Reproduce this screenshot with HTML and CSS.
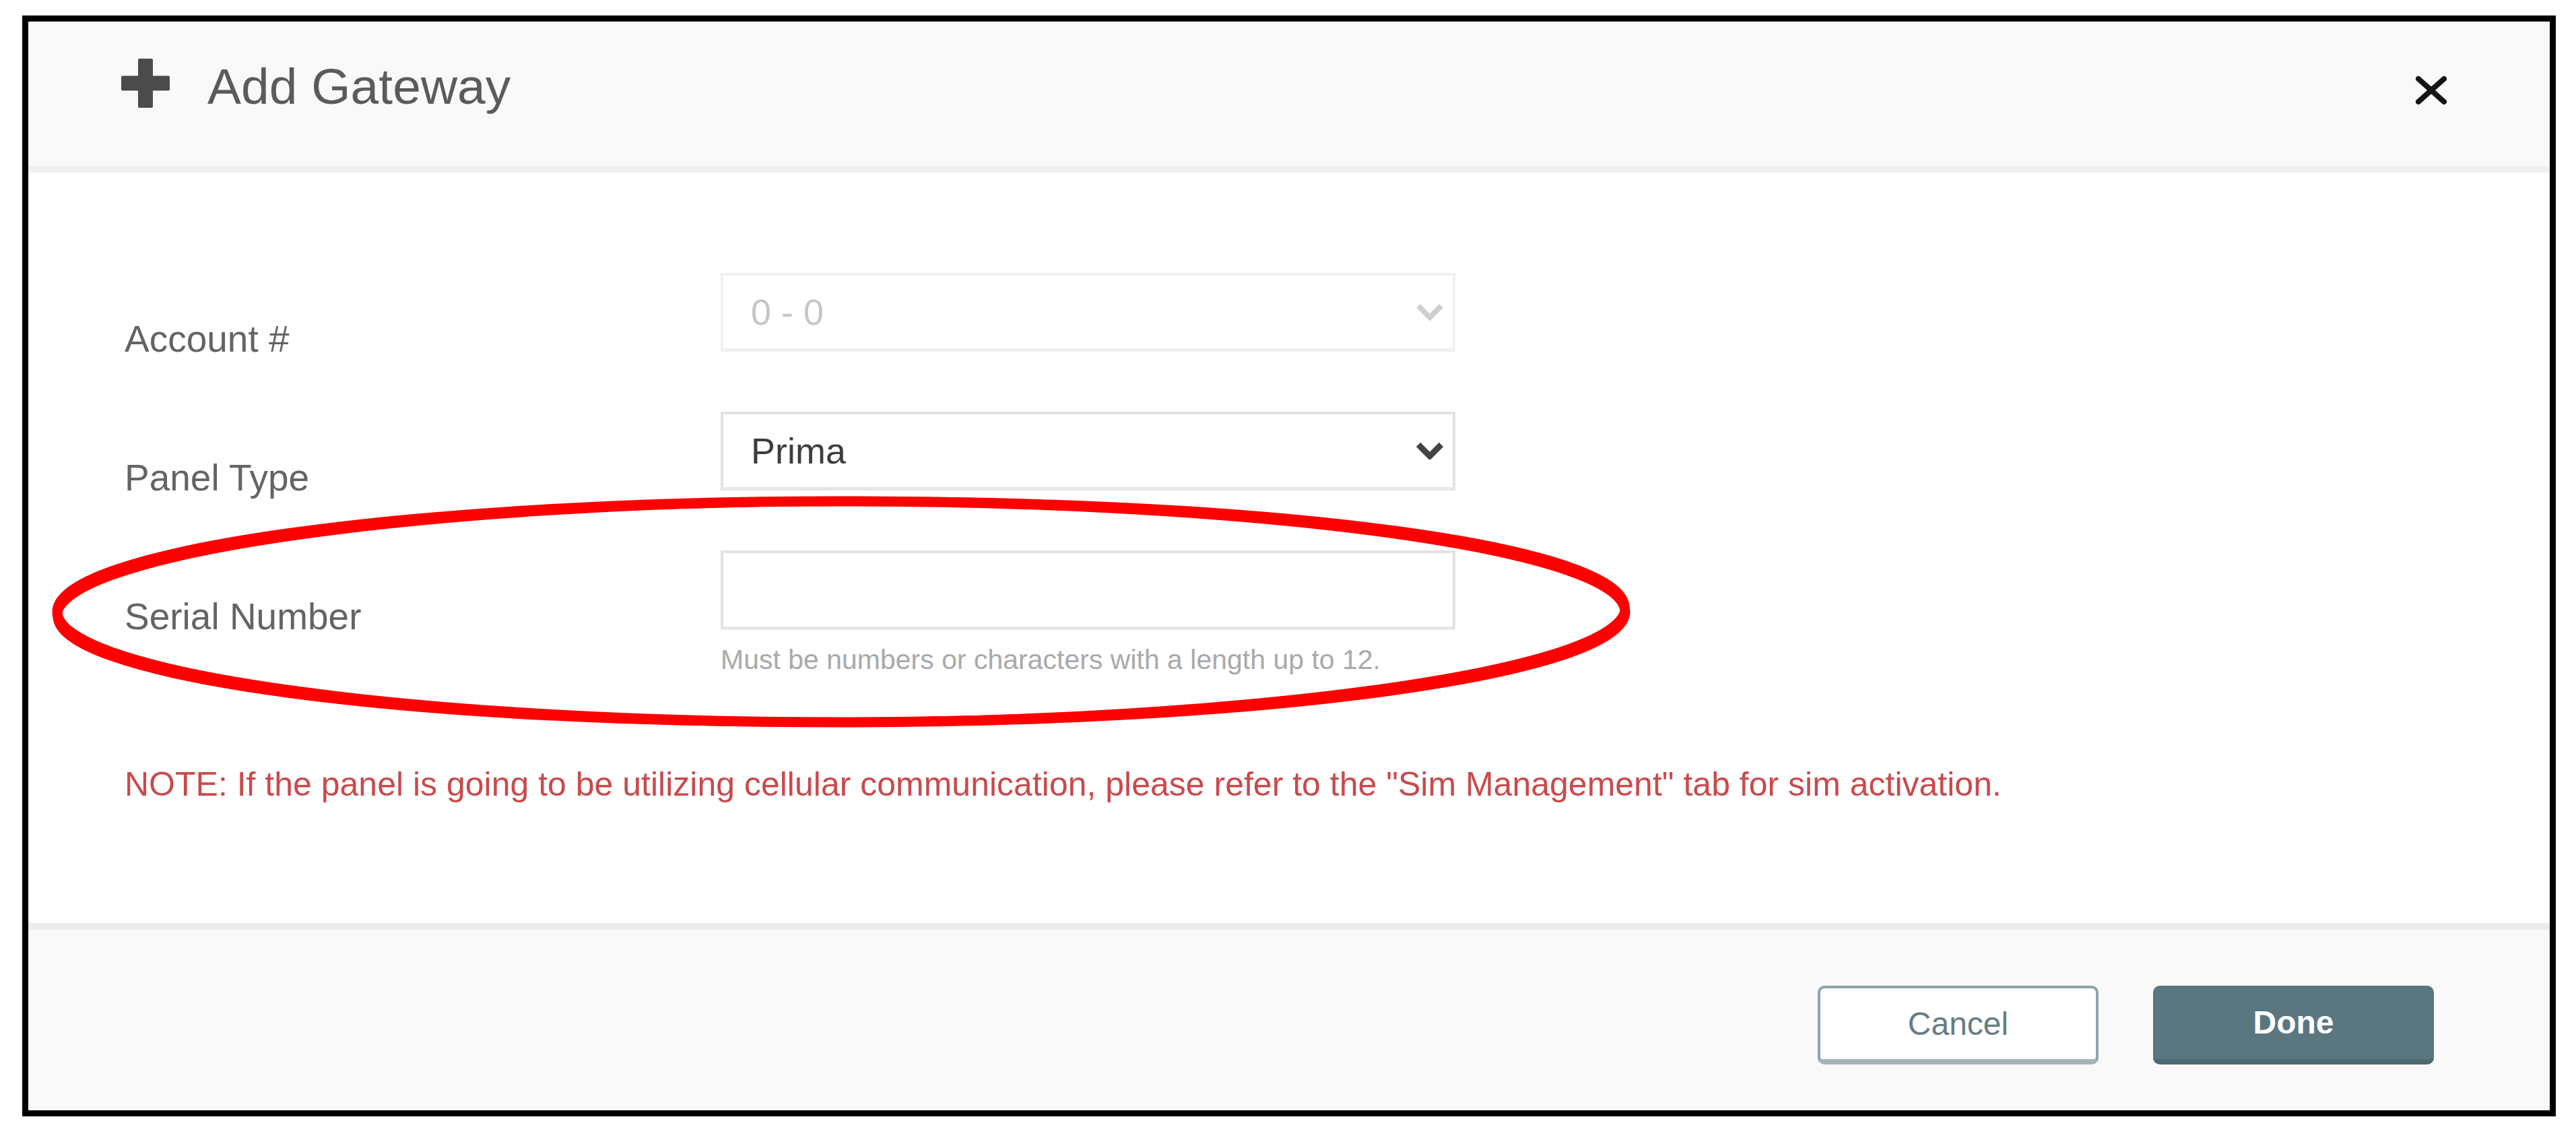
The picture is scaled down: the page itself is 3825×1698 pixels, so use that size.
FILE: index.html
```html
<!DOCTYPE html>
<html lang="en">
<head>
<meta charset="utf-8">
<title>Add Gateway</title>
<link rel="stylesheet" href="styles.css">
</head>
<body>
<div class="frame">
  <div class="modal-header">
    <svg class="plus" viewBox="0 0 72 73" aria-hidden="true">
      <rect x="25" y="0" width="22" height="73" rx="2" fill="#4b4b4b"/>
      <rect x="0" y="25.5" width="72" height="22" rx="2" fill="#4b4b4b"/>
    </svg>
    <h4 class="title">Add Gateway</h4>
    <button class="close" type="button" aria-label="Close">
      <svg viewBox="0 0 46 42" aria-hidden="true">
        <path d="M4 4 L42 38 M42 4 L4 38" stroke="#151515" stroke-width="8" stroke-linecap="square" fill="none"/>
        <rect x="17" y="15" width="12" height="12" fill="#151515"/>
      </svg>
    </button>
  </div>

  <div class="modal-body">
    <div class="form-row">
      <label class="label">Account #</label>
      <div class="field">
        <div class="select disabled">
          <span>0 - 0</span>
          <svg class="chev" viewBox="0 0 40 26" aria-hidden="true"><polyline points="3,4 20,21 37,4" fill="none" stroke="#cfcfcf" stroke-width="8"/></svg>
        </div>
      </div>
    </div>

    <div class="form-row">
      <label class="label">Panel Type</label>
      <div class="field">
        <div class="select">
          <span>Prima</span>
          <svg class="chev" viewBox="0 0 40 26" aria-hidden="true"><polyline points="3,4 20,21 37,4" fill="none" stroke="#444" stroke-width="9"/></svg>
        </div>
      </div>
    </div>

    <div class="form-row">
      <label class="label">Serial Number</label>
      <div class="field">
        <div class="input"></div>
        <p class="help">Must be numbers or characters with a length up to 12.</p>
      </div>
    </div>

    <p class="note">NOTE: If the panel is going to be utilizing cellular communication, please refer to the "Sim Management" tab for sim activation.</p>
  </div>

  <div class="modal-footer">
    <button class="btn btn-cancel" type="button">Cancel</button>
    <button class="btn btn-done" type="button">Done</button>
  </div>

  <svg class="annotation" viewBox="0 0 2380 380" aria-hidden="true">
    <ellipse cx="1189" cy="188" rx="1164" ry="164" fill="none" stroke="#fe0000" stroke-width="15"/>
    <ellipse cx="1189" cy="188" rx="1164" ry="164" fill="none" stroke="#fe0000" stroke-width="13" transform="rotate(-0.35 1189 188)"/>
  </svg>
</div>
</body>
</html>
```

FILE: styles.css
```css
* {
  box-sizing: border-box;
}

body {
  margin: 0;
  background: #ffffff;
  font-family: "Liberation Sans", Arial, Helvetica, sans-serif;
}

.frame {
  position: relative;
  width: 3762px;
  margin: 23px 0 0 33px;
  border: 9px solid #000000;
  background: #ffffff;
}

/* header */
.modal-header {
  display: flex;
  align-items: flex-start;
  height: 224px;
  padding: 0 153px 0 138px;
  background: #f9f9f9;
  border-bottom: 9px solid #efefef;
}

.plus {
  flex: none;
  width: 72px;
  height: 73px;
  margin-top: 55px;
}

.title {
  margin: 59px 0 0 56px;
  font-size: 75px;
  line-height: 1;
  font-weight: normal;
  color: #5b5b5b;
}

.close {
  margin: 81px 0 0 auto;
  width: 46px;
  height: 42px;
  padding: 0;
  border: 0;
  background: none;
}

.close svg {
  display: block;
  width: 46px;
  height: 42px;
}

/* body */
.modal-body {
  padding: 149px 0 176px 143px;
}

.form-row {
  display: flex;
  align-items: flex-start;
}

.form-row + .form-row {
  margin-top: 89px;
}

.label {
  flex: 0 0 885px;
  margin-top: 71px;
  margin-bottom: -10px;
  font-size: 55px;
  line-height: 1;
  color: #646464;
}

.field {
  flex: 0 0 1091px;
}

.select {
  display: flex;
  align-items: center;
  justify-content: space-between;
  height: 117px;
  padding: 0 14px 0 41px;
  background: #ffffff;
  border: 4px solid #e2e2e2;
  border-bottom: 5px solid #e6e6e6;
  font-size: 54px;
  line-height: 1;
  color: #3d3d3d;
}

.select.disabled {
  border-color: #f1f1f1;
  color: #c6c6c6;
}

.chev {
  width: 40px;
  height: 26px;
}

.input {
  height: 118px;
  background: #ffffff;
  border: 4px solid #e2e2e2;
  border-bottom: 5px solid #e6e6e6;
}

.help {
  margin: 20px 0 0;
  font-size: 41px;
  line-height: 1.2;
  color: #a9a9a9;
}

.note {
  margin: 130px 0 0;
  font-size: 50px;
  line-height: 1.2;
  color: #c94a4c;
}

/* footer */
.modal-footer {
  display: flex;
  justify-content: flex-end;
  align-items: flex-start;
  gap: 81px;
  height: 278px;
  padding: 83px 172px 0 0;
  background: #f9f9f9;
  border-top: 10px solid #ececec;
}

.btn {
  width: 417px;
  height: 117px;
  border-radius: 10px;
  font-family: inherit;
  font-size: 48px;
  line-height: 1;
  padding: 0;
}

.btn-cancel {
  background: #ffffff;
  border: 4px solid #8ea3aa;
  border-bottom: 8px solid #a3b4b9;
  color: #667c84;
}

.btn-done {
  background: #5a7780;
  border: 0;
  border-bottom: 8px solid #4e6a73;
  color: #ffffff;
  font-weight: bold;
}

/* red hand-drawn annotation on top of the form */
.annotation {
  position: absolute;
  left: 18px;
  top: 688px;
  width: 2380px;
  height: 380px;
  overflow: visible;
  pointer-events: none;
}
```
